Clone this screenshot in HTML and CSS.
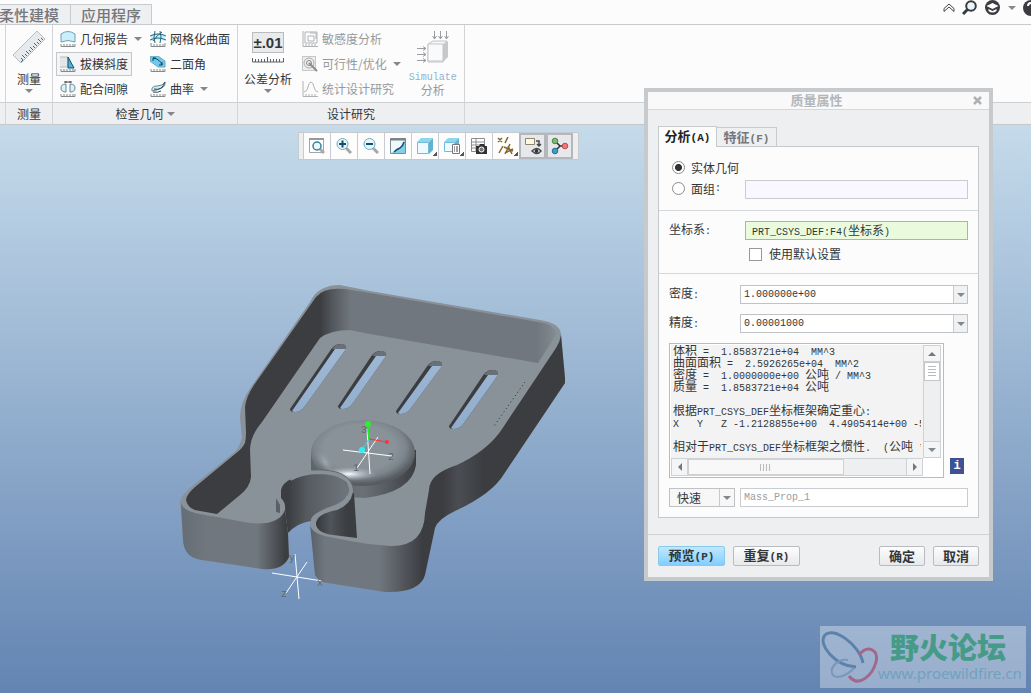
FILE: index.html
```html
<!DOCTYPE html>
<html lang="zh-CN">
<head>
<meta charset="utf-8">
<title>质量属性</title>
<link rel="stylesheet" href="styles.css">
</head>
<body>
<div class="app">
<header class="ribbon">
  <div class="tabs">
    <button class="tab tab-first">柔性建模</button>
    <button class="tab">应用程序</button>
    <div class="tools">
      <svg width="12" height="10" viewBox="0 0 12 10"><path d="M1 5.500 6 1l5 4.500M1 8.500 6 4l5 4.500M1 5.500v3M11 5.500v3" fill="none" stroke="#444"/></svg>
      <svg width="15" height="15" viewBox="0 0 15 15"><circle cx="9" cy="6" r="4.800" fill="#eaf6fb" stroke="#383b3e" stroke-width="2"/><path d="M5.500 9.500 1 14" stroke="#383b3e" stroke-width="3"/></svg>
      <svg width="17" height="16" viewBox="0 0 17 16"><circle cx="8.500" cy="7.500" r="7.500" fill="#3a3c3f"/><path d="M2.500 6 8.500 3l6 3-6 3z" fill="#fff"/><path d="M4.500 9v2q4 3 8 0V9l-4 2z" fill="#fff"/></svg>
      <span class="arrow"></span>
      <svg width="16" height="16" viewBox="0 0 16 16"><circle cx="8" cy="8" r="8" fill="#3a3c3f"/><path d="M5 6q0-3 3-3t3 3q0 1-2 2.500V10M9 11.500V13" fill="none" stroke="#fff" stroke-width="2"/></svg>
    </div>
  </div>
  <div class="groups">
    <section class="group g-edge"><div class="body"></div><div class="caption"></div></section>
    <section class="group g-measure">
      <div class="body">
        <button class="big">
          <svg width="34" height="34" viewBox="0 0 34 34"><path d="M1 25 25 1l8 8L9 33z" fill="#e7eaec" stroke="#b9bdc0"/><path d="m9 32 2-2-2-2m4 0-3-3m5 1-2-2m4 0-3-3m5 1-2-2m4 0-3-3m5 1-2-2m4 0-3-3m5 1-2-2m4 0-3-3m5 1-2-2" fill="none" stroke="#2f7394"/></svg>
          <span>测量</span><i class="arrow"></i>
        </button>
      </div>
      <div class="caption">测量</div>
    </section>
    <section class="group g-check">
      <div class="body">
        <div class="stack">
          <button class="cmd"><svg class="ic" viewBox="0 0 16 16"><path d="M1 11V3q7-5 14 0v8q-7-3-14 0z" fill="#caeffa" stroke="#6ba2b5"/><path d="M1 13v2.500h14V13M4 13v2m3-2v2m3-2v2m3-2v2" fill="none" stroke="#85898c"/></svg>几何报告<i class="arrow"></i></button>
          <button class="cmd on"><svg class="ic" viewBox="0 0 16 16"><path d="M0 1h8v10H0" fill="#e4e6e8" stroke="#bbb"/><path d="m8 1 6 11H8z" fill="#4eb5d8" stroke="#174c66"/><path d="M1 13v2.500h14V13M4 13v2m3-2v2m3-2v2m3-2v2" fill="none" stroke="#85898c"/></svg>拔模斜度</button>
          <button class="cmd"><svg class="ic" viewBox="0 0 16 16"><path d="M6 3Q1 3 1 7t5 4zM10 3q5 0 5 4t-5 4z" fill="#d8f2fa" stroke="#6d858f"/><path d="M4 1h8M6 0v2m4-2v2" stroke="#444"/><path d="M1 13v2.500h14V13M4 13v2m3-2v2m3-2v2m3-2v2" fill="none" stroke="#85898c"/></svg>配合间隙</button>
        </div>
        <div class="stack">
          <button class="cmd"><svg class="ic" viewBox="0 0 16 16"><path d="M1 4q7-4 14 0v6q-7-3-14 0z" fill="#c5eefa"/><path d="M0 5q8-4 16 0M0 9q8-4 16 0M5 0q-2 6 0 12M10 0q2 6 0 12M12 1q-5 3-9 9" fill="none" stroke="#28687f"/><path d="M1 12v3.500h14V12M4 13v2m3-2v2m3-2v2m3-2v2" fill="none" stroke="#85898c"/></svg>网格化曲面</button>
          <button class="cmd"><svg class="ic" viewBox="0 0 16 16"><path d="M0 0h8l7 5v6H8L0 5z" fill="#6fcbee" stroke="#69a6bd"/><path d="M3 2q7 1 9 7M3 5V2h3M9 9h3V6" fill="none" stroke="#123f56"/><path d="M1 13v2.500h14V13M4 13v2m3-2v2m3-2v2m3-2v2" fill="none" stroke="#85898c"/></svg>二面角</button>
          <button class="cmd"><svg class="ic" viewBox="0 0 16 16"><path d="M2 10Q1 5 7 5t8-4q1 4-3 6t-10 3z" fill="#cdeef8" stroke="#73848c"/><path d="M4 8q8 2 11-7M3 11q5 1 8-1" fill="none" stroke="#23495b"/><path d="M1 13v2.500h14V13M4 13v2m3-2v2m3-2v2m3-2v2" fill="none" stroke="#85898c"/></svg>曲率<i class="arrow"></i></button>
        </div>
      </div>
      <div class="caption">检查几何<i class="arrow"></i></div>
    </section>
    <section class="group g-study">
      <div class="body">
        <button class="big">
          <svg width="34" height="34" viewBox="0 0 34 34"><rect x="1.500" y="2.500" width="31" height="20" fill="#e9eaec" stroke="#b9bbbe"/><text x="17" y="18" text-anchor="middle" class="tol">±.01</text><path d="M1.500 28v4h31v-4M4.500 29v3m3-3v3m3-3v3m3-3v3m3-5v5m3-3v3m3-3v3m3-3v3m3-3v3" fill="none" stroke="#5d6063"/></svg>
          <span>公差分析</span><i class="arrow"></i>
        </button>
        <div class="stack dim">
          <button class="cmd" disabled><svg class="ic" viewBox="0 0 16 16"><path d="M3 1h12v11H3zM6 5h6v5H6zM8 2h6v6M1 0v15.500h15M4 13v2m3-2v2m3-2v2m3-2v2" fill="none" stroke="#b0b2b4"/></svg>敏感度分析</button>
          <button class="cmd" disabled><svg class="ic" viewBox="0 0 16 16"><rect x=".5" y=".5" width="13" height="14" fill="#eee" stroke="#c5c7c9"/><circle cx="7" cy="7" r="5" fill="none" stroke="#aaa"/><circle cx="7" cy="7" r="2.500" fill="none" stroke="#888"/><path d="m7 7 8 8" stroke="#8a8c8e" stroke-width="2"/></svg>可行性/优化<i class="arrow"></i></button>
          <button class="cmd" disabled><svg class="ic" viewBox="0 0 16 16"><path d="M1 0v15.500h15M4 13v2m3-2v2m3-2v2m3-2v2M2 11q3 0 4-5t3-5 3 5 4 5" fill="none" stroke="#b0b2b4"/></svg>统计设计研究</button>
        </div>
        <button class="big dim" disabled>
          <svg width="34" height="34" viewBox="0 0 34 34"><path d="m12 14 5-3h14l-4 4v17H12z" fill="#f7f7f7" stroke="#c2c4c6"/><path d="m27 15 5-4v16l-5 5z" fill="#c6c8ca"/><path d="M12 14h15v17H12z" fill="#fafafa" stroke="#c2c4c6"/><path d="M18.500 1v8m-2-3 2 3 2-3m4-5v8m-2-3 2 3 2-3m4-5v8m-2-3 2 3 2-3M1 18.500h9m-3-2 3 2-3 2M1 24.500h9m-3-2 3 2-3 2M1 30.500h9m-3-2 3 2-3 2" fill="none" stroke="#9b9da0"/></svg>
          <span class="m blue">Simulate</span><span>分析</span>
        </button>
      </div>
      <div class="caption">设计研究</div>
    </section>
    <section class="group g-rest"><div class="body"></div><div class="caption"></div></section>
  </div>
</header>

<main class="view">
  <svg class="model" width="410" height="330" viewBox="170 275 410 330">
    <defs>
      <linearGradient id="inner" gradientUnits="userSpaceOnUse" x1="180" y1="0" x2="560" y2="0"><stop offset=".37" stop-color="#3b3d41"/><stop offset=".4" stop-color="#52575c"/><stop offset=".45" stop-color="#70777e"/><stop offset=".94" stop-color="#70777e"/><stop offset="1" stop-color="#878f97"/></linearGradient>
      <linearGradient id="right" gradientUnits="userSpaceOnUse" x1="310" y1="0" x2="566" y2="0"><stop offset="0" stop-color="#596066"/><stop offset=".06" stop-color="#70777e"/><stop offset=".27" stop-color="#70777e"/><stop offset=".44" stop-color="#3b3d41"/><stop offset=".52" stop-color="#3b3d41"/><stop offset=".58" stop-color="#4a4d52"/><stop offset=".68" stop-color="#3b3d41"/></linearGradient>
      <linearGradient id="left" gradientUnits="userSpaceOnUse" x1="180" y1="0" x2="290" y2="0"><stop offset="0" stop-color="#656d74"/><stop offset=".25" stop-color="#70777e"/><stop offset=".7" stop-color="#70777e"/><stop offset=".96" stop-color="#3b3d41"/></linearGradient>
      <linearGradient id="bore" gradientUnits="userSpaceOnUse" x1="281" y1="0" x2="350" y2="0"><stop offset=".1" stop-color="#3b3d41"/><stop offset=".38" stop-color="#555b60"/><stop offset="1" stop-color="#70777e"/></linearGradient>
      <linearGradient id="nook" gradientUnits="userSpaceOnUse" x1="316" y1="0" x2="357" y2="0"><stop offset="0" stop-color="#34363a"/><stop offset=".35" stop-color="#50555a"/><stop offset=".75" stop-color="#3b3d41"/></linearGradient>
      <linearGradient id="side" gradientUnits="userSpaceOnUse" x1="311" y1="0" x2="416" y2="0"><stop offset="0" stop-color="#5d646a"/><stop offset=".5" stop-color="#697077"/><stop offset=".75" stop-color="#54595f"/><stop offset="1" stop-color="#3b3d41"/></linearGradient>
      <radialGradient id="dome" cx=".47" cy=".42" r=".55"><stop offset=".62" stop-color="#899199"/><stop offset=".8" stop-color="#7e868d"/><stop offset="1" stop-color="#565c62"/></radialGradient>
      <radialGradient id="shine"><stop offset="0" stop-color="#fff"/><stop offset=".4" stop-color="#ccd4dc" stop-opacity=".7"/><stop offset="1" stop-color="#a9b2ba" stop-opacity="0"/></radialGradient>
      <linearGradient id="sky" gradientUnits="userSpaceOnUse" x1="0" y1="125" x2="0" y2="693"><stop offset="0" stop-color="#c5dbeb"/><stop offset="1" stop-color="#6384b2"/></linearGradient>
    </defs>
    <path fill="#899199" d="M340 285Q318 285 310 302L251 387Q240 403 240 417Q241 430 242 437Q241 443 236 451L200 480Q180 495 180 502L183 540Q184 558 202 560L262 569Q285 571 289 557L288 533Q297 523 311 521L315 575Q319 582 328 583L385 592Q420 593 425 575L435 528Q438 519 455 511Q492 494 504 474L565 383V378L561 334Q560 323 540 320L370 291Z"/>
    <path fill="url(#inner)" d="M246 433Q246 438 245 443Q242 449 235 454L195 487Q186 495 186 500Q188 510 200 511L217 514L240 495Q250 487 251 477L250 450Q250 436 262 422L320 338Q331 330 350 330L370 334L538 363L553 340Q559 332 553 328Q549 323 538 322L370 293L345 289Q324 287 316 297L254 385Q246 397 245 407Z"/>
    <path fill="url(#right)" d="M561 335Q560 342 556 348L500 432Q485 452 457 465Q429 474 429 490L425 513Q424 547 390 546Q370 545 350 541L330 537Q311 534 310 524L315 575Q319 582 328 583L385 592Q420 593 425 575L435 528Q438 519 455 511Q492 494 504 474L565 383V378Z"/>
    <path fill="url(#left)" d="M181 503Q183 511 200 514L250 523Q279 526 285 510L288 533L289 557Q283 571 262 569L202 560Q184 558 183 540Z"/>
    <path d="M290 409 332 348Q336 344 340 344Q347 344 346 349L305 406Q301 412 294 412Q290 412 290 409ZM338 406 372 355Q376 351 380 351Q387 351 386 356L353 403Q349 409 342 409Q338 409 338 406ZM396 411 428 365Q432 361 436 361Q443 361 442 366L411 408Q407 414 400 414Q396 414 396 411ZM449 426 484 374Q488 370 492 370Q499 370 498 375L464 423Q460 429 453 429Q449 429 449 426Z" fill="#3b3d41"/>
    <path d="m332 349q4-5 9-5 6 0 5 5M372 356q4-5 9-5 6 0 5 5M428 366q4-5 9-5 6 0 5 5M484 375q4-5 9-5 6 0 5 5" fill="#697077"/>
    <path fill="url(#sky)" d="M292 411 335 349H346L305 406Q301 412 294 412ZM340 408 376 356H386L353 403Q349 409 342 409ZM398 413 432 366H442L411 408Q407 414 400 414ZM451 428 488 375H498L464 423Q460 429 453 429Z"/>
    <path d="M525 382 494 426" stroke="#2c2e31" stroke-dasharray="1 3"/>
    <path fill="url(#side)" d="M311 452V470Q330 498 365 498Q412 492 416 465V450Z"/>
    <ellipse cx="363" cy="453" rx="52" ry="33" fill="url(#dome)"/>
    <ellipse cx="349" cy="474" rx="28" ry="7" fill="url(#shine)"/>
    <ellipse cx="325" cy="462" rx="6" ry="14" transform="rotate(-35 325 462)" fill="url(#shine)" opacity=".25"/>
    <path fill="url(#bore)" d="M281 498V490Q284 476 317 473Q349 474 348 493Q343 506 327 510Q311 513 311 521Q297 523 288 533L285 510Q286 503 281 498Z"/>
    <path d="M290 479Q300 473 317 472Q350 472 351 490Q350 503 330 509Q312 515 312 525" fill="none" stroke="#899199" stroke-width="4"/>
    <path d="M312 470Q350 468 354 490" fill="none" stroke="#62696f"/>
    <path d="M276 498v14l4 1v-8z" fill="#596067"/>
    <path fill="url(#nook)" d="M353 493Q350 505 337 510Q316 514 316 524Q317 533 333 535L357 538L354 493Z"/>
    <path d="M343 450 392 456M367 429 370 474M378 437 357 468M272 573 322 581M295 554 299 599M307 562 286 593" stroke="#fff"/>
    <path d="m368 424 1 15" stroke="#2de52d" stroke-width="2"/><path d="m369 439 18 3" stroke="#f33" stroke-width="1"/><path d="m369 439-7 11" stroke="#24e6ed"/>
    <circle cx="368" cy="424" r="3" fill="#2df02d"/><circle cx="387" cy="442" r="2" fill="#f33"/><circle cx="362" cy="450" r="3" fill="#2bf1f6"/>
    <g class="axes"><text x="361" y="433">3</text><text x="388" y="460">2</text><text x="353" y="471">1</text><text x="289" y="561">y</text><text x="317" y="586">x</text><text x="281" y="597">z</text></g>
  </svg>

  <div class="bar">
    <button><svg class="ic" viewBox="0 0 16 16"><path d="M.5.500h14v14H.5z" fill="#fff" stroke="#a2a6a9"/><path d="M0 1h15" stroke="#999" stroke-width="2"/><path d="m11 11 4 4" stroke="#aaa" stroke-width="3"/><circle cx="8" cy="8" r="4" fill="#eaf8fd" stroke="#3a7f9c" stroke-width="1.500"/></svg></button>
    <button><svg class="ic" viewBox="0 0 16 16"><path d="m10 10 5 5" stroke="#a5a8aa" stroke-width="3"/><circle cx="6.500" cy="6" r="5.500" fill="#e2f6fc" stroke="#78aabd"/><path d="M3 6h7M6.500 2.500v7" stroke="#174d6b" stroke-width="2"/></svg></button>
    <button><svg class="ic" viewBox="0 0 16 16"><path d="m10 10 5 5" stroke="#a5a8aa" stroke-width="3"/><circle cx="6.500" cy="6" r="5.500" fill="#e2f6fc" stroke="#78aabd"/><path d="M3 6h7" stroke="#174d6b" stroke-width="2"/></svg></button>
    <button><svg class="ic" viewBox="0 0 16 16"><path d="M.5.500h15v15H.5z" fill="#86cde8" stroke="#7d8d95"/><path d="M1 1h14Q12 11 1 15z" fill="#eef9fd"/><path d="M0 1.500h16" stroke="#7c8184" stroke-width="2"/><path d="M14 4q-1 4-4 6-3 1-6 4" fill="none" stroke="#174d6b" stroke-width="1.500"/></svg></button>
    <button class="more"><svg class="ic" viewBox="0 0 16 16"><path d="m0 4 4-4h12l-4 4z" fill="#8ed6ef"/><path d="m12 4 4-4v12l-4 4z" fill="#60b4d2"/><path d="M.5 4.500h11v11H.5z" fill="#eefaff" stroke="#70bdd8"/></svg></button>
    <button class="more"><svg class="ic" viewBox="0 0 16 16"><path d="m0 4 4-4h11l-4 4z" fill="#8ed6ef"/><path d="m11 4 4-4v11l-4 4z" fill="#60b4d2"/><path d="M.5 4.500h10v9H.5z" fill="#eefaff" stroke="#70bdd8"/><path d="M8.500 6.500h7v9h-7z" fill="#fff" stroke="#777"/><path d="M10 9h1m1 0h2m-4 2h1m1 0h2m-4 2h1m1 0h2" stroke="#444"/></svg></button>
    <button><svg class="ic" viewBox="0 0 16 16"><path d="M.5.500h13v13H.5zM.5 4h13M.5 7h13M.5 10h13M5 .500v13" fill="#fff" stroke="#8b8e90"/><path d="M5 8h3l1-2h4l1 2h2v8H5z" fill="#303235"/><circle cx="10.500" cy="11.500" r="2.500" fill="#70757a" stroke="#fff"/></svg></button>
    <button class="more"><svg class="ic wide" viewBox="0 0 18 18"><path d="m1 1 4 4m0-4L1 5m10-5L8 6M6 9l-4 7m11-9-5 10m-1-7 9 4m-8 2 8-4M11 9l4 8" fill="none" stroke="#82662b" stroke-width="1.500"/></svg></button>
    <button class="down"><svg class="ic wide" viewBox="0 0 18 18"><path d="M1.500 1.500h9v6h-9z" fill="#fff7df" stroke="#8c8570"/><path d="M12 4h3v5m-2-2 2 2 2-2" fill="none" stroke="#45494c" stroke-width="1.500"/><path d="M8 14q5-5 9 0-4 5-9 0z" fill="#fff" stroke="#45494c" stroke-width="1.500"/><circle cx="12.500" cy="14" r="2" fill="#33373a"/></svg></button>
    <button class="down"><svg class="ic wide" viewBox="0 0 18 18"><path d="m4 4 5 5-5 5m5-5h5" fill="none" stroke="#333" stroke-width="1.500"/><circle cx="4" cy="4" r="2.800" fill="#7dbb70" stroke="#4d8645"/><circle cx="4" cy="14" r="2.800" fill="#459ac2" stroke="#246f94"/><circle cx="14" cy="9" r="2.800" fill="#ed7b78" stroke="#b94c4a"/></svg></button>
  </div>

  <section class="dialog" role="dialog" aria-labelledby="dlg-title">
    <div class="title"><h1 id="dlg-title">质量属性</h1><button aria-label="关闭"><svg width="9" height="9" viewBox="0 0 9 9"><path d="m1 1 7 7m0-7L1 8" stroke="#aeb2b5" stroke-width="2.500"/></svg></button></div>
    <div class="content">
      <div class="dtabs"><button class="cur">分析<b class="m">(A)</b></button><button>特征<b class="m">(F)</b></button></div>
      <div class="panel">
        <div class="sec kinds">
          <label><input type="radio" name="kind" checked>实体几何</label>
          <div class="row"><label><input type="radio" name="kind">面组<span class="m">:</span></label><input class="field lilac" type="text" aria-label="面组"></div>
        </div>
        <div class="sec csys">
          <div class="row"><label for="csys">坐标系<span class="m">:</span></label><div class="field green" id="csys" role="textbox" tabindex="0"><span class="m">PRT_CSYS_DEF:F4(</span>坐标系<span class="m">)</span></div></div>
          <label class="check"><input type="checkbox">使用默认设置</label>
        </div>
        <div class="sec values">
          <div class="row"><label for="density">密度<span class="m">:</span></label><div class="combo"><input id="density" class="m" value="1.000000e+00"><button aria-label="密度选项"><i class="arrow"></i></button></div></div>
          <div class="row"><label for="accuracy">精度<span class="m">:</span></label><div class="combo"><input id="accuracy" class="m" value="0.00001000"><button aria-label="精度选项"><i class="arrow"></i></button></div></div>
          <div class="out">
            <div class="results">
              <pre><s>体积</s> =  1.8583721e+04  MM^3
<s>曲面面积</s> =  2.5926265e+04  MM^2
<s>密度</s> =  1.0000000e+00 <s>公吨</s> / MM^3
<s>质量</s> =  1.8583721e+04 <s>公吨</s>

<s>根据</s>PRT_CSYS_DEF<s>坐标框架确定重心</s>:
X   Y   Z -1.2128855e+00  4.4905414e+00 -5

<s>相对于</s>PRT_CSYS_DEF<s>坐标框架之惯性</s>.  (<s>公吨</s> *</pre>
              <div class="vbar"><button aria-label="上"><i class="arrow up"></i></button><span class="thumb"></span><button aria-label="下"><i class="arrow"></i></button></div>
              <div class="hbar"><button aria-label="左"><i class="arrow lt"></i></button><span class="thumb"></span><button aria-label="右"><i class="arrow rt"></i></button></div>
            </div>
            <button class="info" aria-label="信息">i</button>
          </div>
          <div class="row last"><div class="pick"><select aria-label="类型"><option>快速</option></select><i class="arrow"></i></div><input class="field name m" aria-label="名称" value="Mass_Prop_1"></div>
        </div>
      </div>
    </div>
    <div class="actions"><button class="primary">预览<span class="m">(P)</span></button><button class="repeat">重复<span class="m">(R)</span></button><button class="ok">确定</button><button>取消</button></div>
  </section>

  <div class="mark">
    <svg width="58" height="58" viewBox="0 0 58 58"><g fill="none"><path d="M43 35C40 17 13-2 5 7S15 38 36 39" stroke="#5c82ac" stroke-width="3"/><path d="M28 32C20 30 10 38 12 45S26 49 34 40" stroke="#7797bb" stroke-width="2"/><path d="M39 27C48 16 59 22 56 34S39 61 29 48" stroke="#a2688b" stroke-width="3"/></g></svg>
    <div><strong>野火论坛</strong><span>www.proewildfire.cn</span></div>
  </div>
</main>
</div>
</body>
</html>
```

FILE: styles.css
```css
* { box-sizing: border-box; }
body { margin: 0; font: 12px/16px "Noto Sans CJK SC", sans-serif; color: #333639; }
button, input, select { font: inherit; color: inherit; margin: 0; padding: 0; border: 0; background: none; border-radius: 0; }
.m { font-family: "Liberation Mono", "Noto Sans CJK SC", monospace; font-size: 10px; }
.app { min-height: 100vh; display: flex; flex-direction: column; overflow: hidden; }
.arrow { display: inline-block; flex: none; width: 0; height: 0; border: 4px solid transparent; border-top-color: #85888b; border-bottom: 0; }
.arrow.up { border: 4px solid transparent; border-bottom-color: #75787b; border-top: 0; }
.arrow.lt { border: 4px solid transparent; border-right-color: #75787b; border-left: 0; }
.arrow.rt { border: 4px solid transparent; border-left-color: #75787b; border-right: 0; }
.ic { width: 16px; height: 16px; flex: none; display: block; }
.ic.wide { width: 18px; height: 18px; }

.ribbon { background: #fcfcfc; }
.tabs { height: 25px; display: flex; align-items: flex-end; border-bottom: 1px solid #c8cbce; overflow: hidden; }
.tab { height: 20px; padding: 0 10px; font-size: 15px; line-height: 18px; font-weight: 500; color: #74777c; background: #eeeff1; border: 1px solid #c8cbce; border-bottom: 0; border-left: 0; }
.tab-first { padding: 0 11px 0 0; margin-left: -1px; }
.tools { margin: 0 -8px 8px auto; display: flex; align-items: center; gap: 7px; height: 17px; }
.groups { display: flex; }
.group { border-right: 1px solid #d2d4d7; display: flex; flex-direction: column; }
.body { height: 77px; display: flex; align-items: flex-start; padding-top: 2px; }
.caption { height: 23px; background: #eeeff1; border-top: 1px solid #cdd0d3; border-bottom: 1px solid #c5c8cb; display: flex; align-items: center; justify-content: center; gap: 3px; }
.g-edge { width: 6px; }
.g-measure { width: 47px; }
.g-measure .body { justify-content: center; }
.g-check { width: 185px; }
.g-check .body { padding-left: 3px; }
.g-study { width: 227px; }
.g-study .body { padding-left: 6px; gap: 6px; }
.g-study .dim.big { margin-left: -2px; }
.g-rest { flex: 1; border-right: 0; }
.big { display: flex; flex-direction: column; align-items: center; padding-top: 3px; line-height: 14px; }
.big svg { margin-bottom: 8px; }
.big .arrow { margin-top: 3px; }
.big.dim span { line-height: 12px; }
.tol { font: bold 15px "Liberation Sans", sans-serif; fill: #333639; }
.stack { display: flex; flex-direction: column; align-items: flex-start; gap: 1px; }
.cmd { height: 24px; padding: 0 3px; border: 1px solid transparent; display: flex; align-items: center; gap: 4px; white-space: nowrap; }
.cmd .arrow { margin-left: 2px; }
.cmd.on { border-color: #c5c7ca; background: #f4f5f6; }
.dim, .dim button { color: #96999c; }
.dim .blue { color: #8fb1d2; }

.view { flex: 1; position: relative; min-height: 568px; background: linear-gradient(#c5dbeb, #6384b2); }
.model { position: absolute; left: 170px; top: 150px; }
.axes { font: 10px "Liberation Mono", monospace; fill: #62666c; }
.bar { position: absolute; left: 298px; top: 7px; height: 28px; display: flex; padding: 0 5px 0 4px; background: #eceef0; border: 1px solid #c6cacd; }
.bar button { width: 27px; display: flex; align-items: center; justify-content: center; background: #fdfdfd; border-left: 1px solid #c8ccd0; }
.bar .more { background: linear-gradient(135deg, transparent 50%, #555 50%) right 1px bottom 3px / 4px 4px no-repeat #fdfdfd; }
.bar .down { background: #e6e8eb; border: 2px solid #b4b7bb; }

.dialog { position: absolute; right: 38px; top: -37px; width: 349px; border: 4px solid #c6cacd; background: #eeeff1; }
.title { height: 18px; display: grid; grid-template-columns: 1fr auto; align-items: center; background: #f9f9fa; border-bottom: 1px solid #d5d8da; padding-right: 7px; }
.title h1 { margin: 0; text-align: center; font-size: 13px; line-height: 14px; color: #b4b7ba; padding: 0 0 2px 12px; }
.title svg { display: block; }
.content { padding: 16px 10px; }
.dtabs { display: flex; align-items: flex-end; }
.dtabs button { height: 19px; width: 60px; font-size: 13px; font-weight: 700; line-height: 17px; color: #74777c; border: 1px solid #c8cbce; border-left: 0; border-bottom: 0; white-space: nowrap; }
.dtabs .cur { height: 21px; width: 59px; border-left: 1px solid #c8cbce; background: #fcfcfc; color: #222; margin-bottom: -1px; position: relative; }
.dtabs .m, .actions .m { font-size: 11px; }
.panel { background: #fcfcfc; border: 1px solid #c6c9cc; }
.sec { padding: 0 10px; border-bottom: 1px solid #d5d8da; display: flex; flex-direction: column; }
.sec:last-child { border-bottom: 0; }
.row { display: flex; align-items: center; justify-content: space-between; }
.field { height: 19px; border: 1px solid #c9ccd0; background: #fff; padding: 0 6px; width: 223px; min-width: 0; }
.lilac { background: #f9f7ff; }
.green { background: #eafbdd; border-color: #adb0b6; line-height: 16px; }
.kinds { height: 64px; padding-top: 11px; }
.kinds label { display: flex; align-items: center; gap: 6px; padding-left: 3px; height: 19px; }
.kinds .row { padding-top: 2px; height: 23px; }
.kinds .row label { padding-bottom: 2px; }
.kinds label .m { margin-left: -6px; }
input[type=radio] { appearance: none; width: 13px; height: 13px; border: 1px solid #888b8f; border-radius: 50%; background: #fff; }
input[type=radio]:checked { background: radial-gradient(#333 40%, #fff 50%); }
.csys { height: 63px; padding-top: 10px; gap: 5px; }
.check { display: flex; align-items: center; gap: 7px; padding-left: 80px; height: 18px; }
input[type=checkbox] { appearance: none; width: 13px; height: 13px; border: 1px solid #95989c; background: #fff; }
.values { padding-top: 11px; padding-bottom: 10px; gap: 10px; }
.combo { width: 228px; height: 19px; display: flex; border: 1px solid #bfc2c6; background: #fff; }
.combo input { flex: 1; min-width: 0; padding-left: 3px; }
.combo button { width: 14px; background: #f0f1f2; border-left: 1px solid #c8cbce; display: flex; align-items: center; justify-content: center; }
.out { display: flex; align-items: flex-end; gap: 6px; }
.results { width: 275px; height: 135px; border: 1px solid #b9bcbf; background: #fff; padding: 1px; display: grid; grid-template: 1fr 18px / 1fr 19px; }
.results pre { margin: 0; padding: 2px 0 0 2px; background: #f3f3f3; overflow: hidden; font: 10px/12px "Liberation Mono", monospace; border-right: 2px solid #f3f3f3; min-width: 0; }
.results s { text-decoration: none; font: 12px/0 "Noto Sans CJK SC", sans-serif; }
.vbar, .hbar { display: flex; background: #eeeff1; border: 1px solid #cfd2d5; }
.vbar { flex-direction: column; margin-right: 1px; }
.vbar button, .hbar button { flex: none; display: flex; align-items: center; justify-content: center; background: #f4f5f6; }
.vbar button { height: 16px; border-bottom: 1px solid #cfd2d5; }
.vbar button:last-child { margin-top: auto; border-top: 1px solid #cfd2d5; border-bottom: 0; }
.hbar button { width: 16px; border-right: 1px solid #cfd2d5; }
.hbar button:last-child { margin-left: auto; border-left: 1px solid #cfd2d5; border-right: 0; }
.vbar .thumb { height: 19px; border: 1px solid #c4c7ca; background: repeating-linear-gradient(#bbb 0 1px, #fff 1px 3px) center / 8px 12px no-repeat #fff; }
.hbar .thumb { width: 156px; border: 1px solid #cfd2d5; background: repeating-linear-gradient(90deg, #bbb 0 1px, #f6f6f6 1px 3px) center / 12px 7px no-repeat #f8f8f8; }
.info { width: 14px; height: 16px; margin-bottom: 4px; background: #3c5294; color: #fff; font: bold 12px/16px "Liberation Mono", monospace; }
.pick { width: 66px; height: 19px; display: grid; grid-template-columns: 1fr 14px; align-items: center; justify-items: center; border: 1px solid #c0c3c6; background: #f7f7f8; }
.pick select { grid-area: 1 / 1 / 2 / 3; width: 100%; height: 17px; appearance: none; padding-left: 7px; line-height: 16px; background: linear-gradient(#c8cbce, #c8cbce) right 14px top / 1px 100% no-repeat; }
.pick .arrow { grid-area: 1 / 2; pointer-events: none; }
.name { width: 228px; color: #999da1; padding: 0 3px; }
.actions { height: 43px; border-top: 1px solid #d0d3d6; padding: 0 10px; display: flex; align-items: center; gap: 8px; }
.actions button { width: 46px; height: 20px; font-size: 13px; line-height: 16px; font-weight: 700; border: 1px solid #b8bbbf; border-radius: 2px; background: linear-gradient(#fdfdfd, #e8e9eb); white-space: nowrap; }
.actions .primary, .actions .repeat { width: 67px; }
.actions .primary { border-color: #8bc9ea; background: linear-gradient(#bfe8ff, #82ceff); }
.actions .ok { margin-left: auto; }

.mark { position: absolute; right: 5px; bottom: 5px; width: 206px; height: 62px; background: rgba(255, 255, 255, .34); display: flex; align-items: center; }
.mark div { display: flex; flex-direction: column; white-space: nowrap; }
.mark strong { font-size: 29px; line-height: 32px; font-weight: 900; color: #469b88; padding-left: 12px; }
.mark span { font: 15px/22px "Noto Sans", sans-serif; color: #70a1be; }
```
